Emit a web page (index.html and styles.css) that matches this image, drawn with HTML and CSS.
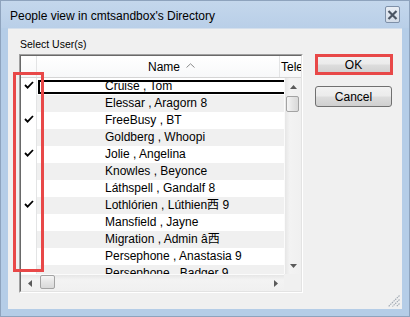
FILE: index.html
```html
<!DOCTYPE html>
<html>
<head>
<meta charset="utf-8">
<link rel="stylesheet" href="styles.css">
</head>
<body>
<div class="window">
  <div class="titlebar">
    <span class="title">People view in cmtsandbox's Directory</span>
    <div class="close">
      <svg width="11" height="10" viewBox="0 0 11 10"><path d="M1.5 1 L9.5 9 M9.5 1 L1.5 9" stroke="#4b5563" stroke-width="2.2" fill="none"/></svg>
    </div>
  </div>
  <div class="client">
    <div class="left">
      <div class="label">Select User(s)</div>
      <div class="list">
        <div class="list-inner">
          <div class="header">
            <div class="hcell hcheck"></div>
            <div class="hcell hname">Name<svg class="caret" width="9" height="5" viewBox="0 0 9 5"><path d="M0.5 4.5 L4.5 0.8 L8.5 4.5" stroke="#8a8a8a" stroke-width="1" fill="none"/></svg></div>
            <div class="hcell htele">Tele</div>
          </div>
          <div class="body">
            <div class="rows">
              <div class="row"><div class="chk"><svg width="10" height="8" viewBox="0 0 10 8"><path d="M1 4 L3.6 6.6 L9 1" stroke="#000" stroke-width="1.8" fill="none"/></svg></div><div class="name"><div class="focus"></div>Cruise , Tom</div></div>
              <div class="row"><div class="chk"></div><div class="name">Elessar , Aragorn 8</div></div>
              <div class="row"><div class="chk"><svg width="10" height="8" viewBox="0 0 10 8"><path d="M1 4 L3.6 6.6 L9 1" stroke="#000" stroke-width="1.8" fill="none"/></svg></div><div class="name">FreeBusy , BT</div></div>
              <div class="row"><div class="chk"></div><div class="name">Goldberg , Whoopi</div></div>
              <div class="row"><div class="chk"><svg width="10" height="8" viewBox="0 0 10 8"><path d="M1 4 L3.6 6.6 L9 1" stroke="#000" stroke-width="1.8" fill="none"/></svg></div><div class="name">Jolie , Angelina</div></div>
              <div class="row"><div class="chk"></div><div class="name">Knowles , Beyonce</div></div>
              <div class="row"><div class="chk"></div><div class="name">Láthspell , Gandalf 8</div></div>
              <div class="row"><div class="chk"><svg width="10" height="8" viewBox="0 0 10 8"><path d="M1 4 L3.6 6.6 L9 1" stroke="#000" stroke-width="1.8" fill="none"/></svg></div><div class="name">Lothlórien , Lúthien西 9</div></div>
              <div class="row"><div class="chk"></div><div class="name">Mansfield , Jayne</div></div>
              <div class="row"><div class="chk"></div><div class="name">Migration , Admin â西</div></div>
              <div class="row"><div class="chk"></div><div class="name">Persephone , Anastasia 9</div></div>
              <div class="row"><div class="chk"></div><div class="name">Persephone , Badger 9</div></div>
            </div>
            <div class="vscroll">
              <div class="arrow-btn"><svg width="7" height="4" viewBox="0 0 7 4"><path d="M0 4 L3.5 0 L7 4 Z" fill="#5a5a5a"/></svg></div>
              <div class="vtrack"><div class="vthumb"></div></div>
              <div class="arrow-btn"><svg width="7" height="4" viewBox="0 0 7 4"><path d="M0 0 L3.5 4 L7 0 Z" fill="#5a5a5a"/></svg></div>
            </div>
            <div class="hscroll">
              <div class="arrow-btn"><svg width="4" height="7" viewBox="0 0 4 7"><path d="M4 0 L0 3.5 L4 7 Z" fill="#5a5a5a"/></svg></div>
              <div class="htrack"><div class="hthumb"></div></div>
              <div class="arrow-btn"><svg width="4" height="7" viewBox="0 0 4 7"><path d="M0 0 L4 3.5 L0 7 Z" fill="#5a5a5a"/></svg></div>
            </div>
            <div class="corner"></div>
          </div>
        </div>
        <div class="redbox"></div>
      </div>
    </div>
    <div class="buttons">
      <div class="btn btn-ok">OK</div>
      <div class="btn">Cancel</div>
    </div>
  </div>
  <svg class="grip" width="12" height="12" viewBox="0 0 12 12"><path d="M11.5 0.5 L0.5 11.5 M11.5 4.5 L4.5 11.5 M11.5 8.5 L8.5 11.5" stroke="#a3abb5" stroke-width="1.2" stroke-dasharray="1.5 0.8" fill="none"/></svg>
</div>
</body>
</html>
```

FILE: styles.css
```css
html, body {
  margin: 0;
  padding: 0;
}
body {
  width: 410px;
  height: 317px;
  overflow: hidden;
  font-family: "Liberation Sans", Arial, "Noto Sans CJK SC", sans-serif;
  font-size: 12px;
  color: #000;
}
.window {
  position: relative;
  width: 410px;
  height: 317px;
  box-sizing: border-box;
  background: #b5cde7;
  border: 1px solid #8ea3bd;
  padding: 0 7px 7px 7px;
  display: flex;
  flex-direction: column;
}
.titlebar {
  height: 27px;
  display: flex;
  align-items: center;
  justify-content: space-between;
  box-sizing: border-box;
  background: linear-gradient(#c4d7ec, #b9cfe8);
  margin: 0 -7px;
  padding: 2px 9px 0 9px;
}
.title {
  font-size: 12px;
  color: #000;
}
.close {
  width: 15px;
  height: 17px;
  box-sizing: border-box;
  border: 1px solid #7e90a8;
  border-radius: 2px;
  background: linear-gradient(#e9eef5, #d3dce8);
  display: flex;
  align-items: center;
  justify-content: center;
  margin-top: -2px;
}
.client {
  flex: 1;
  background: #f0f0f0;
  display: flex;
  padding: 8px 0 0 11px;
  border-top: 1px solid #d4dfec;
}
.left {
  width: 284px;
  display: flex;
  flex-direction: column;
}
.label {
  height: 17px;
  font-size: 10.5px;
  padding-left: 1px;
  line-height: 15px;
}
.list {
  position: relative;
  width: 284px;
  height: 239px;
  box-sizing: border-box;
  border-style: solid;
  border-width: 1px;
  border-color: #a0a0a0 #ffffff #ffffff #a0a0a0;
}
.list-inner {
  height: 100%;
  box-sizing: border-box;
  border-style: solid;
  border-width: 1px;
  border-color: #696969 #e3e3e3 #e3e3e3 #696969;
  display: flex;
  flex-direction: column;
  background: #fff;
}
.header {
  height: 21px;
  display: flex;
  border-bottom: 1px solid #d5d5d5;
  background: linear-gradient(#ffffff, #f7f8f9);
  flex: none;
}
.hcell {
  height: 100%;
  display: flex;
  align-items: center;
  border-right: 1px solid #e3e4e5;
  box-sizing: border-box;
  overflow: hidden;
  white-space: nowrap;
}
.hcheck {
  width: 16px;
}
.hname {
  width: 243px;
  padding-left: 111px;
  font-size: 12px;
}
.caret {
  margin-left: 6px;
  margin-top: -2px;
}
.htele {
  flex: 1;
  border-right: none;
  padding-left: 1px;
}
.body {
  flex: 1;
  display: grid;
  grid-template-columns: 1fr 17px;
  grid-template-rows: 1fr 17px;
  min-height: 0;
}
.rows {
  overflow: hidden;
  min-height: 0;
}
.row {
  height: 17px;
  display: flex;
}
.chk {
  width: 16px;
  flex: none;
  border-right: 1px solid #e3e4e5;
  display: flex;
  align-items: flex-start;
  padding-top: 3px;
  padding-left: 3px;
  box-sizing: border-box;
  background: #fff;
  height: 17px;
}
.name {
  flex: 1;
  position: relative;
  padding-left: 68px;
  line-height: 17px;
  white-space: nowrap;
}
.row:nth-child(even) .name {
  background: #f0f0f0;
}
.focus {
  position: absolute;
  left: 1px;
  right: -4px;
  top: 2px;
  height: 14px;
  box-sizing: border-box;
  border: 2px solid #000;
  border-right: none;
}
.vscroll {
  display: flex;
  flex-direction: column;
  background: linear-gradient(90deg, #e6e6e6, #f3f3f3 30%, #f0f0f0);
  border-left: 1px solid #fbfbfb;
}
.arrow-btn {
  width: 17px;
  height: 17px;
  flex: none;
  display: flex;
  align-items: center;
  justify-content: center;
}
.vtrack {
  flex: 1;
  padding-top: 1px;
}
.vthumb {
  width: 13px;
  height: 16px;
  margin-left: 1px;
  box-sizing: border-box;
  border: 1px solid #a3a3a3;
  border-radius: 2px;
  background: linear-gradient(90deg, #f5f5f5, #e5e5e5 50%, #d9d9d9);
}
.hscroll {
  display: flex;
  background: linear-gradient(#e6e6e6, #f3f3f3 30%, #f0f0f0);
  border-top: 1px solid #fbfbfb;
}
.htrack {
  flex: 1;
  padding-left: 2px;
}
.hthumb {
  width: 15px;
  height: 14px;
  box-sizing: border-box;
  border: 1px solid #a3a3a3;
  border-radius: 2px;
  background: linear-gradient(#f5f5f5, #e5e5e5 50%, #d9d9d9);
}
.corner {
  background: #f0f0f0;
}
.redbox {
  position: absolute;
  left: -7px;
  top: 17px;
  width: 31px;
  height: 200px;
  box-sizing: border-box;
  border: 3px solid #e84848;
}
.buttons {
  margin-left: 12px;
  padding-top: 17px;
  display: flex;
  flex-direction: column;
  gap: 11px;
}
.btn {
  position: relative;
  width: 77px;
  height: 21px;
  box-sizing: border-box;
  border: 1px solid #707070;
  border-radius: 3px;
  background: linear-gradient(#f2f2f2, #ebebeb 48%, #dddddd 52%, #cfcfcf);
  display: flex;
  align-items: center;
  justify-content: center;
  font-size: 12px;
}
.btn-ok::after {
  content: "";
  position: absolute;
  left: -1px;
  top: -1px;
  right: -2px;
  bottom: -1px;
  border: 3px solid #e84848;
}
.grip {
  position: absolute;
  right: 9px;
  bottom: 9px;
}
```
